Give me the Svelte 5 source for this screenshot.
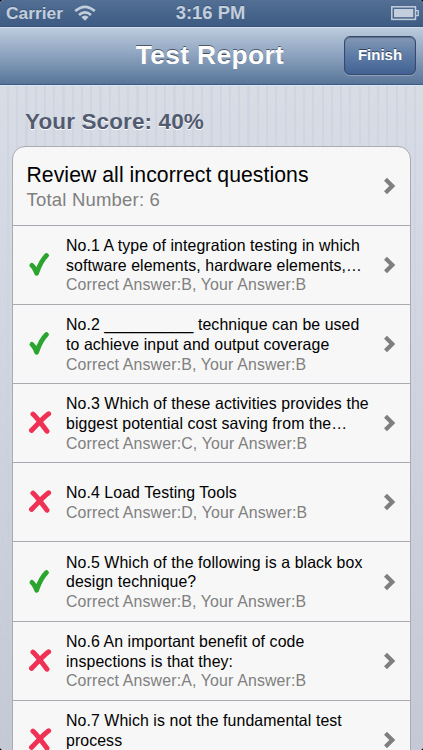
<script>
	let score = 40;

	let questions = [
		{ lines: ['No.1 A type of integration testing in which', 'software elements, hardware elements,…'], correct: true, result: 'Correct Answer:B, Your Answer:B' },
		{ lines: ['No.2 __________ technique can be used', 'to achieve input and output coverage'], correct: true, result: 'Correct Answer:B, Your Answer:B' },
		{ lines: ['No.3 Which of these activities provides the', 'biggest potential cost saving from the…'], correct: false, result: 'Correct Answer:C, Your Answer:B' },
		{ lines: ['No.4 Load Testing Tools'], correct: false, result: 'Correct Answer:D, Your Answer:B' },
		{ lines: ['No.5 Which of the following is a black box', 'design technique?'], correct: true, result: 'Correct Answer:B, Your Answer:B' },
		{ lines: ['No.6 An important benefit of code', 'inspections is that they:'], correct: false, result: 'Correct Answer:A, Your Answer:B' },
		{ lines: ['No.7 Which is not the fundamental test', 'process'], correct: false, result: '' }
	];
</script>

{#snippet chevron()}
	<svg class="chevron" width="14" height="18" viewBox="0 0 14 18">
		<path d="M2.5 2.2 L9.3 9 L2.5 15.8" fill="none" stroke="#7f7f7f" stroke-width="4.2" />
	</svg>
{/snippet}

<div class="screen">
	<div class="status">
		<div class="carrier">
			<span>Carrier</span>
			<svg width="22" height="16" viewBox="0 0 22 16">
				<g fill="none" stroke="#c3cedc" stroke-width="2.7">
					<path d="M1.2 6.1 Q11 -2.5 20.8 6.1" />
					<path d="M5 9.9 Q11 4.7 17 9.9" />
				</g>
				<path d="M7.3 11.9 Q11 8.9 14.7 11.9 L11 15.7 Z" fill="#c3cedc" />
			</svg>
		</div>
		<span class="time">3:16 PM</span>
		<svg class="battery" width="28" height="15" viewBox="0 0 28 15">
			<rect x="0.8" y="0.8" width="23.7" height="12.6" fill="none" stroke="#c3cedc" stroke-width="1.5" />
			<rect x="3" y="3" width="19.3" height="8.2" fill="#c3cedc" />
			<path d="M25 4.6 H27.2 V9.6 H25" fill="none" stroke="#c3cedc" stroke-width="1.4" />
		</svg>
	</div>

	<header>
		<h1>Test Report</h1>
		<button>Finish</button>
	</header>

	<main>
		<h2>Your Score: {score}%</h2>
		<div class="list">
			<div class="row review">
				<div class="text">
					<div class="title">Review all incorrect questions</div>
					<div class="sub">Total Number: 6</div>
				</div>
				{@render chevron()}
			</div>
			{#each questions as q}
				<div class="row">
					<div class="mark">
						{#if q.correct}
							<svg width="24" height="26" viewBox="0 0 24 26">
								<path d="M3.9 13.4 C5.7 14.8 7.2 17.6 8.6 21.2 C10.5 15.8 13.2 8.6 18.5 3.6" fill="none" stroke="#2ba52f" stroke-width="4.8" stroke-linecap="round" stroke-linejoin="round" />
							</svg>
						{:else}
							<svg width="24" height="26" viewBox="0 0 24 26">
								<path d="M5 4.2 C9 7.7 13.5 14 19 21.2 M20.6 3.8 C14 8.7 9.5 14.7 3.5 20.4" fill="none" stroke="#ee3154" stroke-width="5" stroke-linecap="round" />
							</svg>
						{/if}
					</div>
					<div class="text">
						{#each q.lines as line}
							<div class="line">{line}</div>
						{/each}
						<div class="answer">{q.result}</div>
					</div>
					{@render chevron()}
				</div>
			{/each}
		</div>
	</main>
</div>

<style>
	:global(body) {
		margin: 0;
		background: #000;
	}

	.screen {
		height: 750px;
		display: flex;
		flex-direction: column;
		overflow: hidden;
		border-radius: 4px;
		font-family: 'Liberation Sans', Arial, sans-serif;
		background: #d5d9e3;
	}

	.status {
		box-sizing: border-box;
		flex: none;
		height: 27px;
		padding: 0 4px 0 6px;
		display: grid;
		grid-template-columns: 1fr auto 1fr;
		align-items: center;
		color: #c3cedc;
		font-size: 18.4px;
		font-weight: bold;
		line-height: 26px;
		background: linear-gradient(#536f94, #3d5b83);
		border-bottom: 1px solid #37547a;
		text-shadow: 0 -1px 0 rgba(40, 60, 90, 0.4);
	}

	.carrier {
		display: flex;
		align-items: center;
		gap: 11px;
	}

	.carrier span {
		font-size: 17.4px;
	}

	.time {
		margin: 0 2px 0 -2px;
	}

	.battery {
		justify-self: end;
	}

	header {
		position: relative;
		box-sizing: border-box;
		flex: none;
		height: 58px;
		padding-right: 3px;
		display: flex;
		align-items: center;
		justify-content: center;
		background: linear-gradient(#bccbdd, #8ba1be 50%, #587599);
		border-top: 1px solid #d3deea;
		border-bottom: 1px solid #3f5b82;
	}

	h1 {
		margin: 0 0 2px;
		color: #fff;
		font-size: 26.4px;
		line-height: 30px;
		letter-spacing: 0.35px;
		text-shadow: 0 -1px 0 rgba(0, 0, 0, 0.5);
	}

	button {
		position: absolute;
		top: 8px;
		right: 7px;
		box-sizing: border-box;
		width: 72px;
		height: 39px;
		padding: 0 0 2px;
		border: 1px solid #354a6c;
		border-radius: 6px;
		color: #fff;
		font: bold 15px 'Liberation Sans', Arial, sans-serif;
		text-shadow: 0 -1px 0 rgba(0, 0, 0, 0.5);
		background: linear-gradient(#8499b6, #5d7ba5 50%, #416293);
		box-shadow: 0 1px 0 rgba(255, 255, 255, 0.25), inset 0 1px 1px rgba(30, 45, 70, 0.4);
	}

	main {
		flex: 1;
		min-height: 0;
		padding: 0 12px;
		border-top: 1px solid #d8e5f5;
		background:
			linear-gradient(rgba(210, 215, 226, 0), rgba(205, 210, 223, 0.7) 40%, rgba(195, 199, 211, 0.9)),
			repeating-linear-gradient(90deg, #d7dce5 0 7px, #d0d6e1 7px 9.25px);
	}

	h2 {
		margin: 0;
		padding: 23px 0 10.5px 13px;
		color: #535b70;
		font-size: 22.5px;
		line-height: 26px;
		letter-spacing: 0.12px;
		text-shadow: 0 1px 0 #fff;
	}

	.list {
		border: 1px solid #a9abb0;
		border-radius: 13px 13px 0 0;
		background: #f7f7f7;
	}

	.row {
		box-sizing: border-box;
		height: 79.2px;
		padding-right: 13px;
		display: flex;
		align-items: center;
		border-bottom: 1px solid #a9abb0;
	}

	.mark {
		width: 53px;
		flex: none;
		display: flex;
		justify-content: center;
	}

	.text {
		flex: 1;
		min-width: 0;
		padding-top: 1.4px;
		white-space: nowrap;
	}

	.review .text {
		padding-left: 13.5px;
	}

	.title {
		font-size: 21.2px;
		line-height: 27px;
		letter-spacing: 0.06px;
	}

	.sub {
		color: #808080;
		font-size: 18.5px;
		line-height: 24px;
		letter-spacing: 0.2px;
	}

	.line,
	.answer {
		min-height: 19.8px;
		font-size: 15.86px;
		line-height: 19.8px;
		letter-spacing: 0.09px;
	}

	.answer {
		color: #808080;
		letter-spacing: 0.16px;
	}

	.chevron {
		flex: none;
	}
</style>
